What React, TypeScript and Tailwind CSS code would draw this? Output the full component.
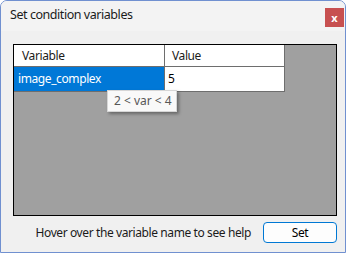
import React from "react";

export default function App() {
  const font = { fontFamily: '"Noto Sans", "Open Sans", sans-serif' };
  return (
    <div
      className="w-[346px] h-[253px] border border-[#7090d0] rounded-t-[7px] bg-[#f0f0f0] flex flex-col overflow-hidden relative text-[12px] tracking-[-0.4px]"
      style={font}
    >
      <div className="h-[30px] bg-[#f3f3f3] flex items-start justify-between shrink-0">
        <div className="pl-[9px] pt-[6px] text-[12.5px] leading-[16px] text-[#1b1b1b] tracking-[-0.45px]">Set condition variables</div>
        <div className="mt-[7px] mr-[1px] w-[19px] h-[19px] bg-[#c75050] flex items-center justify-center text-white text-[11px] font-bold leading-none tracking-normal">
          x
        </div>
      </div>
      <div className="pl-[12px] pt-[13px] flex flex-col">
        <div className="w-[324px] h-[172px] border border-black bg-[#a0a0a0] relative">
          <div className="flex flex-col w-[271px] bg-white">
            <div className="flex h-[22px] border-b border-[#6e6e6e]">
              <div className="w-[151px] border-r border-[#6e6e6e] pl-[8px] leading-[21px] text-[#1b1b1b]">Variable</div>
              <div className="w-[120px] border-r border-[#6e6e6e] pl-[7px] leading-[21px] text-[#1b1b1b]">Value</div>
            </div>
            <div className="flex h-[25px] border-b border-[#6e6e6e]">
              <div className="w-[150px] bg-[#0078d7] text-white pl-[4px] leading-[24px]">image_complex</div>
              <div className="w-[121px] border-l border-r border-[#6e6e6e] pl-[3px] leading-[24px] text-black">5</div>
            </div>
          </div>
          <div className="absolute left-[93px] top-[45px] w-[70px] h-[22px] bg-[#f9f9f9] border border-[#d6d6d6] shadow-[2px_2px_3px_rgba(0,0,0,0.35)] text-[#575757] text-[12px] leading-[20px] pl-[6px] tracking-normal">
            2 &lt; var &lt; 4
          </div>
        </div>
        <div className="flex items-center justify-end w-[324px] mt-[6px]">
          <div className="text-[12px] text-[#1b1b1b] mr-[12px] leading-[20px]">Hover over the variable name to see help</div>
          <div className="w-[74px] h-[21px] border border-[#0078d4] rounded-[4px] bg-[#fdfdfd] flex items-center justify-center text-[12px] text-black">
            Set
          </div>
        </div>
      </div>
    </div>
  );
}
